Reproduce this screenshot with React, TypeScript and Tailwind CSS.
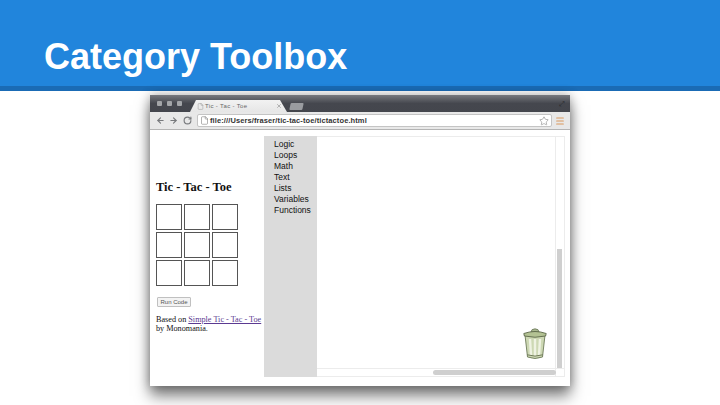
import { Menu, RotateCw, Star, ArrowLeft, ArrowRight, File, X } from "lucide-react";

const categories = ["Logic", "Loops", "Math", "Text", "Lists", "Variables", "Functions"];
const cells = [0, 1, 2, 3, 4, 5, 6, 7, 8];

function TrashCan() {
  return (
    <svg width="24" height="32" viewBox="0 0 24 32" className="block">
      <path d="M8 4 Q8 1 12 0.8 Q16 1 16 4 Z" fill="#a9b78f" stroke="#6b7759" strokeWidth="0.8" />
      <path d="M2 7 L22 7 L19.5 29 Q12 32 4.5 29 Z" fill="#cdd8b4" stroke="#6d7a58" strokeWidth="0.9" />
      <path d="M0.8 5.5 Q12 1.5 23.2 5.5 L22.6 8 Q12 10.5 1.4 8 Z" fill="#b3c293" stroke="#5c6849" strokeWidth="0.9" />
      <path d="M7 11 L8 27 M12 11 L12 28 M17 11 L16 27" stroke="#eef2e2" strokeWidth="2.4" fill="none" />
      <path d="M4.2 26.8 Q12 29.4 19.8 26.8" stroke="#66724f" strokeWidth="0.9" fill="none" />
    </svg>
  );
}

function Toolbar() {
  return (
    <div className="h-[18px] bg-[#e8e8e8] border-b border-[#b4b4b4] flex items-center pl-[6px] pr-[5px]">
      <ArrowLeft size={9} strokeWidth={3} className="text-[#77797c]" />
      <ArrowRight size={9} strokeWidth={3} className="text-[#77797c] ml-[4px]" />
      <RotateCw size={9} strokeWidth={3} className="text-[#77797c] ml-[5px]" />
      <div className="ml-[5px] w-[355px] h-[13px] bg-white border border-[#c4c4c4] rounded-[2px] flex items-center pl-[2px] pr-[2px]">
        <File size={9} strokeWidth={1.5} className="text-[#777]" />
        <span className="ml-[1px] text-[7.5px] text-[#333] font-['Liberation_Sans',sans-serif] font-bold tracking-[0.1px] whitespace-nowrap">
          file:///Users/fraser/tic-tac-toe/tictactoe.html
        </span>
        <Star size={10} strokeWidth={1.5} className="text-[#888] ml-auto" />
      </div>
      <Menu size={10} strokeWidth={2.5} className="text-[#d9975c] ml-auto" />
    </div>
  );
}

function TitleBar() {
  return (
    <div className="h-[17px] bg-gradient-to-b from-[#77797e] via-[#45474e] to-[#44464d] flex items-end pl-[7px] pr-[5px]">
      <div className="flex gap-[5px] self-center">
        <span className="w-[5px] h-[5px] bg-[#a3a5a8] rounded-[1px]" />
        <span className="w-[5px] h-[5px] bg-[#a3a5a8] rounded-[1px]" />
        <span className="w-[5px] h-[5px] bg-[#a3a5a8] rounded-[1px]" />
      </div>
      <div className="ml-[8px] w-[97px] h-[12px] bg-gradient-to-b from-[#f2f2f2] to-[#e6e6e6] [clip-path:polygon(0_100%,6px_0,90px_0,100%_100%)] flex items-center pl-[7px] pr-[5px]">
        <File size={7} strokeWidth={1.2} className="text-[#777]" />
        <span className="ml-[1px] text-[6px] text-[#666] font-['Liberation_Sans',sans-serif] tracking-[0.35px] whitespace-nowrap">
          Tic - Tac - Toe
        </span>
        <X size={6} strokeWidth={2} className="text-[#777] ml-auto" />
      </div>
      <div className="ml-[3px] w-[13px] h-[7px] bg-[#9a9ca0] rounded-[1px] -skew-x-12 mb-[2px]" />
      <span className="ml-auto self-center text-[7px] leading-none text-[#25272b]">⤢</span>
    </div>
  );
}

function GamePane() {
  return (
    <div className="w-[114px] shrink-0 pl-[6px] font-['Liberation_Serif',serif] text-[#111]">
      <h1 className="mt-[50px] text-[12.5px] leading-[14px] font-bold whitespace-nowrap">Tic - Tac - Toe</h1>
      <div className="mt-[10px] grid grid-cols-[26px_26px_26px] auto-rows-[26px] gap-[2px]">
        {cells.map((cell) => (
          <div key={cell} className="border border-[#555]" />
        ))}
      </div>
      <button className="block mt-[11px] ml-[1px] w-[34px] h-[10px] border border-[#c0c0c0] rounded-[1px] bg-[#f3f3f3] text-[6px] leading-none text-[#555] font-['Liberation_Sans',sans-serif]">
        Run Code
      </button>
      <p className="mt-[8px] text-[8.2px] leading-[9px] whitespace-nowrap">
        Based on{" "}
        <a className="underline text-[#5b3a91]">Simple Tic - Tac - Toe</a>
        <br />
        by Monomania.
      </p>
    </div>
  );
}

function Workspace() {
  return (
    <div className="relative flex-1 mr-[5px] mt-[6px] mb-[9px] border-t border-r border-b border-[#ececec]">
      <div className="absolute right-0 top-0 bottom-0 w-[9px] border-l border-[#ececec]" />
      <div className="absolute left-0 right-0 bottom-[7px] h-px bg-[#ececec]" />
      <div className="absolute right-[2px] top-[112px] bottom-[8px] w-[5px] bg-[#cfcfcf]" />
      <div className="absolute left-[116px] right-[8px] bottom-[1px] h-[5px] bg-[#cfcfcf] rounded-full" />
      <div className="absolute right-[17px] bottom-[16px]">
        <TrashCan />
      </div>
    </div>
  );
}

export default function App() {
  return (
    <div className="w-[720px] h-[405px] bg-white overflow-hidden">
      <header className="h-[91px] bg-[#2185dc] border-b-[5px] border-[#1a6bb5] pl-[44px] pt-[36px]">
        <div className="text-[36px] leading-[42px] font-bold text-white font-['Liberation_Sans',sans-serif] whitespace-nowrap">
          Category Toolbox
        </div>
      </header>
      <main className="pt-[4px] pl-[150px]">
        <div className="w-[420px] h-[291px] bg-white flex flex-col shadow-[0_10px_14px_rgba(0,0,0,0.5),0_0_10px_rgba(0,0,0,0.3)]">
          <TitleBar />
          <Toolbar />
          <div className="flex flex-1 min-h-0">
            <GamePane />
            <aside className="w-[53px] shrink-0 mt-[6px] mb-[9px] bg-[#dbdbdb] pl-[10px] pt-[3px] font-['Liberation_Sans',sans-serif] text-[8.5px] leading-[11px] text-[#111]">
              {categories.map((name) => (
                <div key={name}>{name}</div>
              ))}
            </aside>
            <Workspace />
          </div>
        </div>
      </main>
    </div>
  );
}
